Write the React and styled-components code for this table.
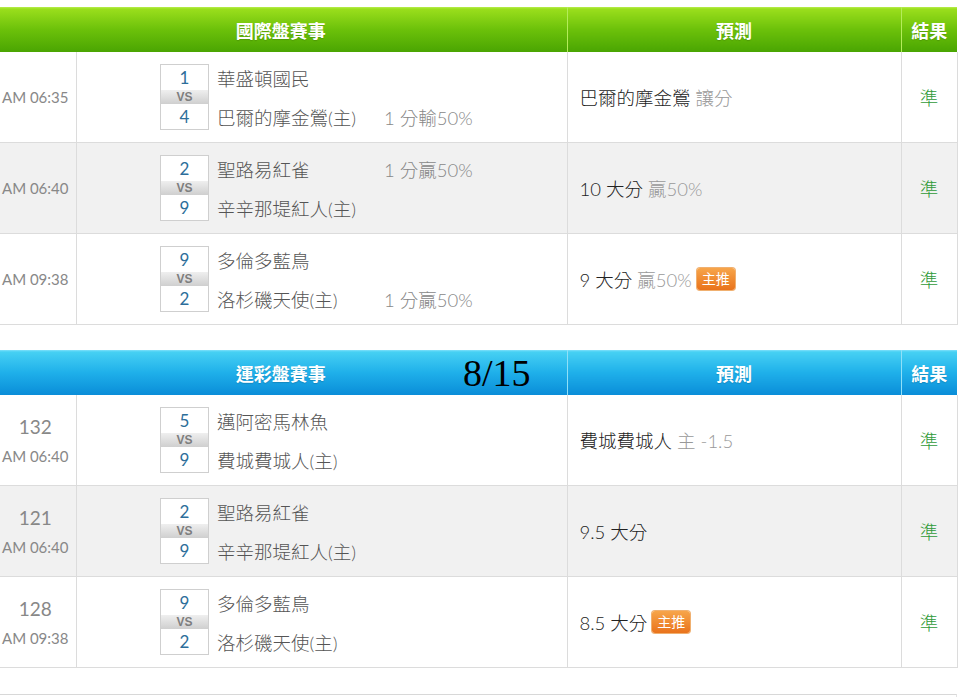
import React from 'react';
import styled, { createGlobalStyle } from 'styled-components';

const Global = createGlobalStyle`
  html, body { margin: 0; padding: 0; background: #fff; }
  body { font-family: Lato, "Noto Sans CJK TC", sans-serif; overflow: hidden; }
`;

const Page = styled.div`
  padding-top: 7px;
  margin-left: -5px;
  width: 962px;
  display: flex;
  flex-direction: column;
  gap: 25px;
`;

const themes = {
  green: { top: '#9ade1c', mid: '#6cc10a', bottom: '#4aa502', line: '#b4ec5a', edge: '#b8ee4e' },
  blue: { top: '#46d0f3', mid: '#1fb0ea', bottom: '#0a8dd8', line: '#8fe0f8', edge: '#7fe0fa' },
};

const Section = styled.div`
  position: relative;
`;

const Table = styled.table`
  width: 962px;
  border-collapse: collapse;
  table-layout: fixed;
`;

const HeadCell = styled.th`
  height: 45px;
  padding: 0;
  color: #fff;
  font-size: 18px;
  font-weight: bold;
  text-align: center;
  text-shadow: 0 1px 1px rgba(0, 0, 0, 0.15);
  background: linear-gradient(
    to bottom,
    ${(p) => themes[p.$theme].edge} 0px,
    ${(p) => themes[p.$theme].top} 2px,
    ${(p) => themes[p.$theme].mid} 50%,
    ${(p) => themes[p.$theme].bottom} 100%
  );
  border-left: ${(p) => (p.$first ? 'none' : `1px solid ${themes[p.$theme].line}`)};
  position: relative;
`;

const DateStamp = styled.span`
  position: absolute;
  left: 468px;
  top: 1px;
  font-family: "Liberation Serif", serif;
  font-weight: normal;
  font-size: 38px;
  line-height: 45px;
  color: #000;
  text-shadow: none;
`;

const Row = styled.tr`
  background: ${(p) => (p.$alt ? '#f1f1f1' : '#fff')};
`;

const Cell = styled.td`
  height: 90px;
  padding: 0;
  border-bottom: 1px solid #dcdcdc;
  border-left: ${(p) => (p.$first ? 'none' : '1px solid #dcdcdc')};
  border-right: ${(p) => (p.$last ? '1px solid #dcdcdc' : 'none')};
  vertical-align: middle;
`;

const TimeBox = styled.div`
  display: flex;
  flex-direction: column;
  align-items: center;
  gap: 8px;
  color: #888;
`;

const GameNo = styled.span`
  font-size: 19px;
  line-height: 24px;
`;

const Clock = styled.span`
  font-size: 15px;
  line-height: 18px;
`;

const Match = styled.div`
  display: flex;
  justify-content: center;
  gap: 8px;
`;

const ScoreBox = styled.div`
  width: 47px;
  border: 1px solid #cfcfcf;
  display: flex;
  flex-direction: column;
  background: #fff;
`;

const Score = styled.span`
  height: 25px;
  line-height: 25px;
  text-align: center;
  font-size: 17px;
  color: #2d6e9a;
`;

const Vs = styled.span`
  height: 14px;
  line-height: 14px;
  text-align: center;
  font-size: 12px;
  font-weight: bold;
  color: #7e7e7e;
  font-family: "Liberation Sans", sans-serif;
  background: linear-gradient(to bottom, #efefef, #cfcfcf);
`;

const Teams = styled.div`
  width: 266px;
  display: flex;
  flex-direction: column;
  gap: 14px;
  padding-top: 1px;
`;

const TeamLine = styled.div`
  height: 25px;
  display: flex;
  align-items: center;
  font-size: 18.5px;
  font-weight: 300;
  color: #555;
`;

const TeamName = styled.span`
  width: 167px;
  white-space: nowrap;
`;

const Handicap = styled.span`
  color: #888;
  white-space: nowrap;
`;

const Pick = styled.div`
  padding-left: 12px;
  display: flex;
  align-items: center;
  font-size: 18.5px;
  font-weight: 300;
  color: #222;
  white-space: nowrap;
`;

const Sub = styled.span`
  color: #999;
  margin-left: 5px;
`;

const Badge = styled.span`
  margin-left: 5px;
  width: 38px;
  height: 22px;
  line-height: 22px;
  border-radius: 3px;
  text-align: center;
  font-size: 14px;
  font-weight: normal;
  color: #fff;
  background: linear-gradient(to bottom, #f7a54a, #e9731c);
  box-shadow: 0 0 0 1px #f0b070;
`;

const Result = styled.div`
  text-align: center;
  font-size: 18.5px;
  font-weight: 300;
  color: #2f9a38;
`;

const NextBox = styled.div`
  height: 2px;
  margin-top: 1px;
  border-top: 1px solid #d8d8d8;
  border-right: 1px solid #e4e4e4;
  width: 961px;
`;

const intl = [
  {
    time: 'AM 06:35',
    s1: '1', s2: '4',
    t1: '華盛頓國民', t2: '巴爾的摩金鶯(主)',
    h1: '', h2: '1 分輸50%',
    pick: '巴爾的摩金鶯', sub: '讓分', badge: false,
  },
  {
    time: 'AM 06:40',
    s1: '2', s2: '9',
    t1: '聖路易紅雀', t2: '辛辛那堤紅人(主)',
    h1: '1 分贏50%', h2: '',
    pick: '10 大分', sub: '贏50%', badge: false,
  },
  {
    time: 'AM 09:38',
    s1: '9', s2: '2',
    t1: '多倫多藍鳥', t2: '洛杉磯天使(主)',
    h1: '', h2: '1 分贏50%',
    pick: '9 大分', sub: '贏50%', badge: true,
  },
];

const lottery = [
  {
    no: '132', time: 'AM 06:40',
    s1: '5', s2: '9',
    t1: '邁阿密馬林魚', t2: '費城費城人(主)',
    h1: '', h2: '',
    pick: '費城費城人', sub: '主 -1.5', badge: false,
  },
  {
    no: '121', time: 'AM 06:40',
    s1: '2', s2: '9',
    t1: '聖路易紅雀', t2: '辛辛那堤紅人(主)',
    h1: '', h2: '',
    pick: '9.5 大分', sub: '', badge: false,
  },
  {
    no: '128', time: 'AM 09:38',
    s1: '9', s2: '2',
    t1: '多倫多藍鳥', t2: '洛杉磯天使(主)',
    h1: '', h2: '',
    pick: '8.5 大分', sub: '', badge: true,
  },
];

function GameTable({ theme, title, rows, stamp }) {
  return (
    <Section>
      <Table>
        <colgroup>
          <col style={{ width: 81 }} />
          <col style={{ width: 491 }} />
          <col style={{ width: 334 }} />
          <col style={{ width: 56 }} />
        </colgroup>
        <thead>
          <tr>
            <HeadCell $theme={theme} $first colSpan={2}>
              {title}
              {stamp && <DateStamp>{stamp}</DateStamp>}
            </HeadCell>
            <HeadCell $theme={theme}>預測</HeadCell>
            <HeadCell $theme={theme}>結果</HeadCell>
          </tr>
        </thead>
        <tbody>
          {rows.map((r, i) => (
            <Row key={i} $alt={i === 1}>
              <Cell $first>
                <TimeBox>
                  {r.no && <GameNo>{r.no}</GameNo>}
                  <Clock>{r.time}</Clock>
                </TimeBox>
              </Cell>
              <Cell>
                <Match>
                  <ScoreBox>
                    <Score>{r.s1}</Score>
                    <Vs>VS</Vs>
                    <Score>{r.s2}</Score>
                  </ScoreBox>
                  <Teams>
                    <TeamLine>
                      <TeamName>{r.t1}</TeamName>
                      <Handicap>{r.h1}</Handicap>
                    </TeamLine>
                    <TeamLine>
                      <TeamName>{r.t2}</TeamName>
                      <Handicap>{r.h2}</Handicap>
                    </TeamLine>
                  </Teams>
                </Match>
              </Cell>
              <Cell>
                <Pick>
                  {r.pick}
                  {r.sub && <Sub>{r.sub}</Sub>}
                  {r.badge && <Badge>主推</Badge>}
                </Pick>
              </Cell>
              <Cell $last>
                <Result>準</Result>
              </Cell>
            </Row>
          ))}
        </tbody>
      </Table>
    </Section>
  );
}

export default function App() {
  return (
    <>
      <Global />
      <Page>
        <GameTable theme="green" title="國際盤賽事" rows={intl} />
        <GameTable theme="blue" title="運彩盤賽事" rows={lottery} stamp="8/15" />
        <NextBox />
      </Page>
    </>
  );
}
